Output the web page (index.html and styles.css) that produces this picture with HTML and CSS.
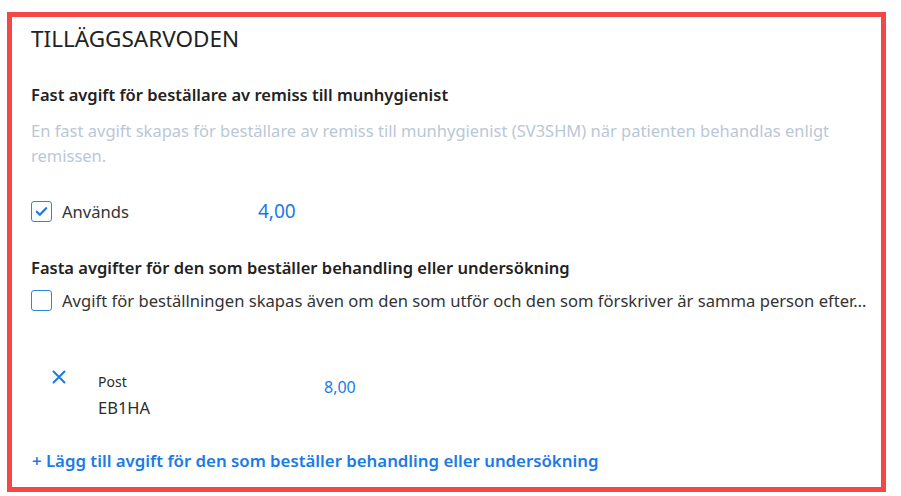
FILE: index.html
```html
<!DOCTYPE html>
<html lang="sv">
<head>
    <meta charset="UTF-8">
    <meta name="viewport" content="width=device-width, initial-scale=1.0">
    <title>Tilläggsarvoden</title>
    <link rel="stylesheet" href="styles.css">
</head>
<body>

    <div class="panel">
        <h2 class="panel-title">TILLÄGGSARVODEN</h2>

        <div class="section first">
            <h3 class="section-title">Fast avgift för beställare av remiss till munhygienist</h3>
            <p class="hint">En fast avgift skapas för beställare av remiss till munhygienist (SV3SHM) när patienten behandlas enligt remissen.</p>

            <div class="used-row">
                <label class="check">
                    <span class="box">
                        <svg viewBox="0 0 16 16" width="15" height="15"><path d="M3 8.3l3.2 3.1L13 4.6" fill="none" stroke="#1a7ae6" stroke-width="2.4" stroke-linecap="round" stroke-linejoin="round"/></svg>
                    </span>
                    Används
                </label>
                <span class="amount big">4,00</span>
            </div>
        </div>

        <div class="section">
            <h3 class="section-title">Fasta avgifter för den som beställer behandling eller undersökning</h3>
            <label class="check single-line">
                <span class="box"></span>
                <span class="ellipsis">Avgift för beställningen skapas även om den som utför och den som förskriver är samma person efter…</span>
            </label>

            <div class="fee-row">
                <button class="remove" title="Ta bort">
                    <svg viewBox="0 0 14 14" width="14" height="14"><path d="M1.5 1.5l11 11M12.5 1.5l-11 11" stroke="#1a7ae6" stroke-width="2" stroke-linecap="round"/></svg>
                </button>
                <div class="fee-code">
                    <span class="fee-label">Post</span>
                    <span class="fee-value">EB1HA</span>
                </div>
                <span class="amount">8,00</span>
            </div>

            <a href="#" class="add-link">+ Lägg till avgift för den som beställer behandling eller undersökning</a>
        </div>
    </div>

</body>
</html>
```

FILE: styles.css
```css
body {
    margin: 0;
    background: white;
    font-family: 'Noto Sans', 'Open Sans', sans-serif;
    color: #2b2b2b;
}
.panel {
    margin: 12px 15px 4px 7px;
    border: 5px solid #f44848;
    padding: 7px 10px 0 19px;
    height: 480px;
    box-sizing: border-box;
}
.panel-title {
    margin: 0;
    font-size: 22.5px;
    font-weight: 400;
    line-height: 30px;
    color: #222;
}
.section.first {
    margin-top: 30px;
}
.section-title {
    margin: 0;
    font-size: 16.5px;
    font-weight: 600;
    line-height: 22px;
    color: #222;
}
.hint {
    margin: 12px 0 0;
    font-size: 16.5px;
    line-height: 25px;
    color: #b9c7d8;
}
.used-row {
    display: flex;
    align-items: center;
    margin: 32px 0 35px;
}
.check {
    display: flex;
    align-items: center;
    gap: 10px;
    height: 22px;
    font-size: 16.6px;
    color: #333;
}
.used-row .check {
    width: 227px;
}
.box {
    width: 21px;
    height: 21px;
    box-sizing: border-box;
    flex-shrink: 0;
    border: 1.5px solid #2a84ea;
    border-radius: 3px;
    display: flex;
    align-items: center;
    justify-content: center;
    background: white;
}
.single-line {
    margin-top: 10px;
}
.ellipsis {
    white-space: nowrap;
    overflow: hidden;
    text-overflow: ellipsis;
}
.amount {
    color: #1a7ae6;
    font-size: 16px;
    line-height: 22px;
}
.amount.big {
    font-size: 19px;
}
.fee-row {
    display: flex;
    align-items: flex-start;
    margin-top: 53px;
}
.remove {
    background: none;
    border: none;
    padding: 6px 0 0;
    margin: 0 32px 0 21px;
    cursor: pointer;
    line-height: 0;
}
.fee-code {
    display: flex;
    flex-direction: column;
    width: 226px;
    padding-top: 9px;
}
.fee-label {
    font-size: 14px;
    line-height: 18px;
}
.fee-value {
    margin-top: 4px;
    font-size: 16.5px;
    line-height: 26px;
}
.fee-row .amount {
    padding-top: 12px;
}
.add-link {
    display: inline-block;
    margin-top: 29px;
    margin-left: 1px;
    color: #1a7ae6;
    font-size: 16.8px;
    font-weight: 600;
    line-height: 22px;
    text-decoration: none;
}
```
